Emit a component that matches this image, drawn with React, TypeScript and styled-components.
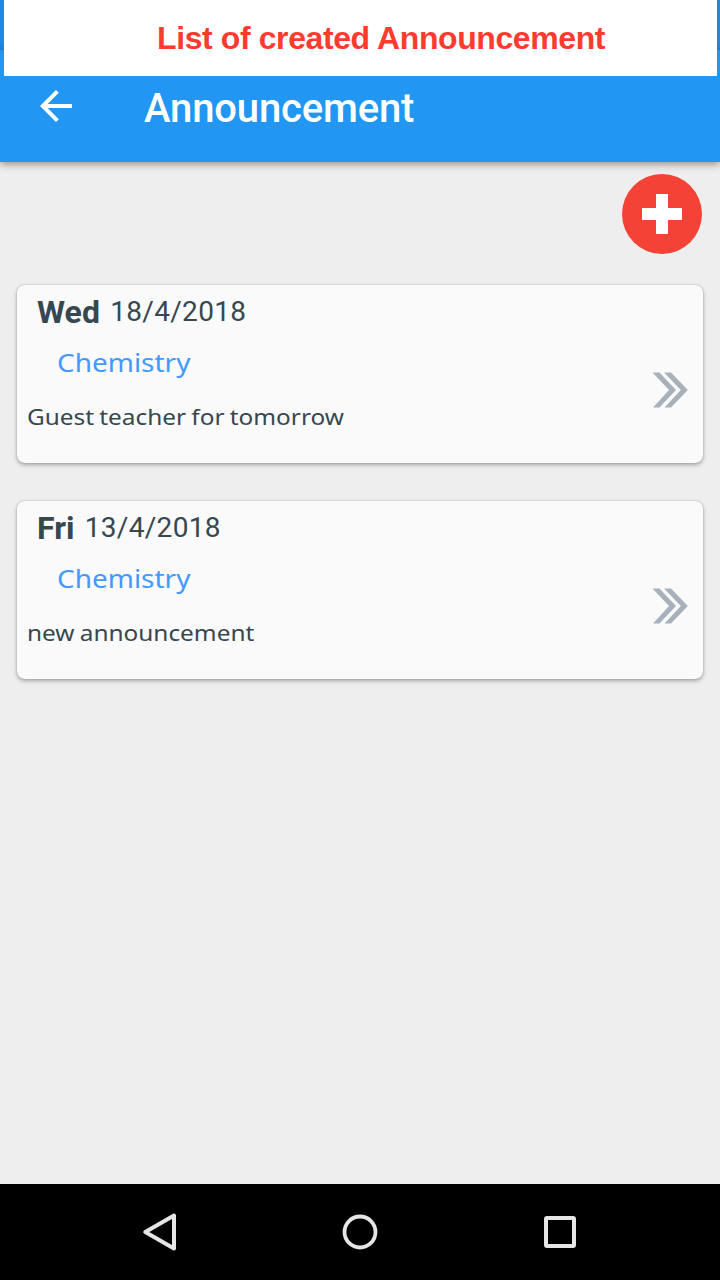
import React from "react";
import styled, { createGlobalStyle } from "styled-components";

const GlobalStyle = createGlobalStyle`
  * { box-sizing: border-box; }
  body { margin: 0; background: #eeeeee; }
`;

const Screen = styled.div`
  position: relative;
  display: flex;
  flex-direction: column;
  width: 720px;
  height: 1280px;
  overflow: hidden;
  background: #eeeeee;
  font-family: Roboto, sans-serif;
  color: #37474f;
`;

const StatusBar = styled.div`
  flex: none;
  height: 50px;
  background: #1e88e5;
`;

const Toolbar = styled.header`
  flex: none;
  display: flex;
  align-items: flex-start;
  height: 112px;
  padding: 32px 32px 0;
  background: #2196f3;
  box-shadow: 0 2px 8px rgba(0, 0, 0, 0.42);
`;

const BackButton = styled.button`
  width: 48px;
  height: 48px;
  padding: 0;
  border: 0;
  background: none;
  svg { display: block; }
`;

const Title = styled.h1`
  margin: 3px 0 0 64px;
  font-size: 40px;
  font-weight: 500;
  line-height: 48px;
  letter-spacing: -0.15px;
  color: #ffffff;
  white-space: nowrap;
`;

const Caption = styled.div`
  position: absolute;
  top: 0;
  left: 4px;
  width: 713px;
  height: 76px;
  padding-left: 153px;
  background: #ffffff;
  color: #ff3b30;
  font-family: "Liberation Sans", sans-serif;
  font-size: 32px;
  font-weight: 700;
  line-height: 76px;
  letter-spacing: -0.4px;
  white-space: nowrap;
`;

const Content = styled.main`
  flex: 1;
  display: flex;
  flex-direction: column;
  padding: 12px 17px 0;
`;

const AddButton = styled.button`
  align-self: flex-end;
  display: grid;
  place-items: center;
  width: 80px;
  height: 80px;
  margin-right: 1px;
  padding: 0;
  border: 0;
  border-radius: 50%;
  background: #f44336;
`;

const List = styled.div`
  display: flex;
  flex-direction: column;
  gap: 38px;
  margin-top: 31px;
`;

const Card = styled.article`
  display: flex;
  justify-content: space-between;
  height: 178px;
  padding: 0 15px 0 10px;
  border-radius: 8px;
  background: #fafafa;
  box-shadow: 0 2px 4px rgba(0, 0, 0, 0.3), 0 0 2px rgba(0, 0, 0, 0.18);
`;

const Details = styled.div`
  display: flex;
  flex-direction: column;
  align-items: flex-start;
  white-space: nowrap;
`;

const DateLine = styled.div`
  display: flex;
  align-items: flex-start;
  gap: 10px;
  height: 53px;
  padding-left: 10px;
`;

const Day = styled.strong`
  font-size: 32px;
  font-weight: 700;
  line-height: 54px;
  letter-spacing: 0.1px;
`;

const DateText = styled.span`
  font-size: 28px;
  line-height: 54px;
  letter-spacing: 0.33px;
`;

const Subject = styled.div`
  margin-left: 30px;
  font-family: "Noto Sans", sans-serif;
  font-size: 26px;
  line-height: 48px;
  color: #4499ff;
  transform: scaleX(1.076);
  transform-origin: left;
`;

const Message = styled.div`
  font-family: "Noto Sans", sans-serif;
  font-size: 22px;
  line-height: 60px;
  word-spacing: -1px;
  transform: scaleX(1.108);
  transform-origin: left;
`;

const Chevrons = styled.svg`
  flex: none;
  align-self: flex-start;
  margin-top: 87px;
`;

const NavBar = styled.nav`
  flex: none;
  display: flex;
  align-items: center;
  justify-content: center;
  gap: 152px;
  height: 96px;
  background: #000000;
  svg { display: block; }
`;

const items = [
  { day: "Wed", date: "18/4/2018", subject: "Chemistry", message: "Guest teacher for tomorrow" },
  { day: "Fri", date: "13/4/2018", subject: "Chemistry", message: "new announcement" },
];

export default function App() {
  return (
    <Screen>
      <GlobalStyle />
      <StatusBar />
      <Toolbar>
        <BackButton aria-label="Back">
          <svg width="48" height="48" viewBox="0 0 24 24" fill="#ffffff">
            <path d="M20 11H7.83l5.59-5.59L12 4l-8 8 8 8 1.41-1.41L7.83 13H20v-2z" />
          </svg>
        </BackButton>
        <Title>Announcement</Title>
      </Toolbar>
      <Content>
        <AddButton aria-label="Add announcement">
          <svg width="40" height="40" viewBox="0 0 40 40" fill="#ffffff">
            <path d="M14 0h12v14h14v12H26v14H14V26H0V14h14z" />
          </svg>
        </AddButton>
        <List>
          {items.map((item) => (
            <Card key={item.date}>
              <Details>
                <DateLine>
                  <Day>{item.day}</Day>
                  <DateText>{item.date}</DateText>
                </DateLine>
                <Subject>{item.subject}</Subject>
                <Message>{item.message}</Message>
              </Details>
              <Chevrons width="37" height="36" viewBox="0 0 37 36" fill="#a7b1bb">
                <path d="M1.5 0.5h7L25 18 8.5 35.5H2L18 18z" />
                <path d="M13 0.5h7L36.8 18 20 35.5h-6.5L29.8 18z" />
              </Chevrons>
            </Card>
          ))}
        </List>
      </Content>
      <NavBar>
        <svg width="48" height="48" viewBox="0 0 48 48" fill="none" stroke="#e6e6e6" strokeWidth="4" strokeLinejoin="round">
          <path d="M38 7.5v33L9.3 24z" />
        </svg>
        <svg width="48" height="48" viewBox="0 0 48 48" fill="none" stroke="#e6e6e6" strokeWidth="3.8">
          <circle cx="24" cy="24" r="15.5" />
        </svg>
        <svg width="48" height="48" viewBox="0 0 48 48" fill="none" stroke="#e6e6e6" strokeWidth="4">
          <rect x="10" y="10" width="28" height="28" rx="1" />
        </svg>
      </NavBar>
      <Caption>List of created Announcement</Caption>
    </Screen>
  );
}
